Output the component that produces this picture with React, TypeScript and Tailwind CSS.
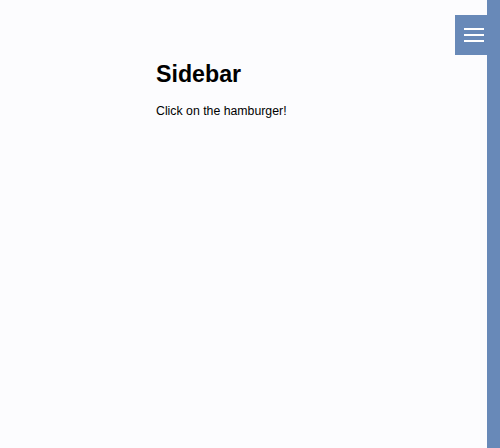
export default function App() {
  return (
    <div className="flex h-[448px] w-[500px] overflow-hidden bg-[#fcfcfe] font-['Liberation_Sans',Arial,sans-serif] text-black">
      <main className="flex-1 pl-[156px] pt-[60px]">
        <h1 className="text-[23.2px] font-bold leading-[28px]">Sidebar</h1>
        <p className="mt-[15px] text-[12.3px] leading-[16px]">Click on the hamburger!</p>
      </main>
      <aside className="relative w-[13px] bg-[#6889b8]">
        <button className="absolute right-[13px] top-[15px] flex h-[40px] w-[32px] flex-col items-center justify-center gap-[4px] bg-[#6889b8] pl-[6px]">
          <span className="block h-[2px] w-[20px] bg-white" />
          <span className="block h-[2px] w-[20px] bg-white" />
          <span className="block h-[2px] w-[20px] bg-white" />
        </button>
      </aside>
    </div>
  );
}
